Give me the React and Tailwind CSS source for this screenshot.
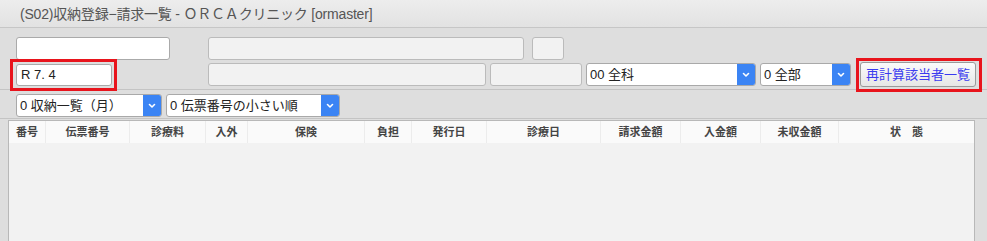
import React from 'react';

const font = { fontFamily: '"Liberation Sans", "Noto Sans CJK JP", sans-serif' };

const columns = [
  ['番号', 'w-[37px]'],
  ['伝票番号', 'w-[84px]'],
  ['診療料', 'w-[76px]'],
  ['入外', 'w-[42px]'],
  ['保険', 'w-[117px]'],
  ['負担', 'w-[47px]'],
  ['発行日', 'w-[75px]'],
  ['診療日', 'w-[114px]'],
  ['請求金額', 'w-[80px]'],
  ['入金額', 'w-[80px]'],
  ['未収金額', 'w-[78px]'],
  ['状　態', 'flex-1'],
];

function Chevron() {
  return (
    <svg width="8" height="6" viewBox="0 0 8 6" fill="none">
      <path d="M1.5 1.5 L4 4 L6.5 1.5" stroke="white" strokeWidth="1.6" strokeLinecap="round" strokeLinejoin="round" />
    </svg>
  );
}

function Select({ value, className }) {
  return (
    <div className={`flex h-[23px] rounded-[3px] border border-[#a9a9a9] bg-white overflow-hidden ${className}`}>
      <div className="flex-1 pl-[3px] text-[13px] leading-[21px] text-[#222] whitespace-nowrap">{value}</div>
      <div className="w-[18px] bg-[#3b84f4] flex items-center justify-center">
        <Chevron />
      </div>
    </div>
  );
}

export default function App() {
  return (
    <div className="w-[987px] h-[241px] bg-[#dedede] overflow-hidden" style={font}>
      {/* タイトル */}
      <div className="h-[28px] bg-gradient-to-b from-[#ededed] to-[#e2e2e2] border-b border-[#c6c6c6] pl-[20px] text-[14px] leading-[28px] text-[#555] tracking-[-0.2px]">
        (S02)収納登録−請求一覧 - ＯＲＣＡクリニック [ormaster]
      </div>

      {/* 1行目 */}
      <div className="flex h-[23px] mt-[9px] pl-[16px]">
        <div className="w-[154px] rounded-[3px] border border-[#aaa] bg-white" />
        <div className="w-[316px] ml-[38px] rounded-[3px] border border-[#bbb] bg-[#f2f2f2]" />
        <div className="w-[32px] ml-[8px] rounded-[3px] border border-[#bbb] bg-[#f2f2f2]" />
      </div>

      {/* 2行目 */}
      <div className="flex items-center h-[24px] mt-[3px] pl-[16px] pb-[1px]">
        <div className="relative">
          <div className="w-[96px] h-[22px] rounded-[3px] border border-[#aaa] bg-white pl-[4px] text-[13px] leading-[20px] text-[#222]">
            R 7. 4
          </div>
          <span className="absolute -top-[5px] -bottom-[5px] -left-[6px] -right-[5px] border-[3px] border-[#e8141c] pointer-events-none" />
        </div>
        <div className="w-[278px] h-[23px] ml-[96px] rounded-[3px] border border-[#bbb] bg-[#f2f2f2]" />
        <div className="w-[92px] h-[23px] ml-[4px] rounded-[3px] border border-[#bbb] bg-[#f2f2f2]" />
        <Select value="00 全科" className="w-[170px] ml-[4px]" />
        <Select value="0 全部" className="w-[91px] ml-[4px]" />
        <div className="relative ml-[9px]">
          <button className="block w-[116px] h-[25px] rounded-[3px] border border-[#9a9a9a] bg-gradient-to-b from-[#fbfbfb] to-[#e6e6e6] text-[13px] text-[#3b3bef]">
            再計算該当者一覧
          </button>
          <span className="absolute -top-[4px] -bottom-[5px] -left-[4px] -right-[6px] border-[3px] border-[#e8141c] pointer-events-none" />
        </div>
      </div>

      <div className="mt-[2px] border-b border-[#c4c4c4]" />

      {/* 3行目 */}
      <div className="flex h-[24px] mt-[4px] pl-[16px]">
        <Select value="0 収納一覧（月）" className="w-[146px]" />
        <Select value="0 伝票番号の小さい順" className="w-[174px] ml-[4px]" />
      </div>

      <div className="border-b border-[#c4c4c4]" />

      {/* 一覧 */}
      <div className="ml-[8px] mt-[1px] w-[967px] h-[130px] border border-[#b8b8b8] bg-[#f2f2f2]">
        <div className="flex h-[22px] bg-[#fafafa]">
          {columns.map(([label, w], i) => (
            <div
              key={i}
              className={`${w} ${i < columns.length - 1 ? 'border-r border-[#ececec]' : ''} text-center text-[11px] font-bold leading-[22px] text-[#444] whitespace-nowrap`}
            >
              {label}
            </div>
          ))}
        </div>
      </div>
    </div>
  );
}
